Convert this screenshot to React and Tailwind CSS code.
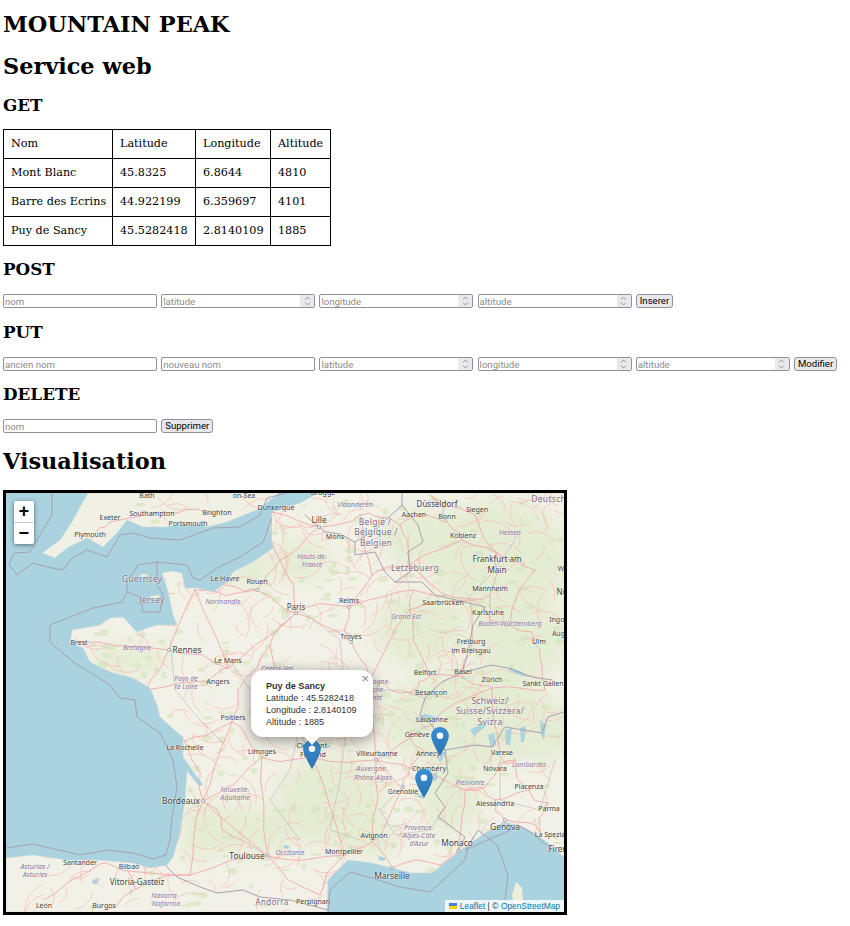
import React from "react";

const serif = "font-['DejaVu_Serif',serif]";

const rows = [
  ["Nom", "Latitude", "Longitude", "Altitude"],
  ["Mont Blanc", "45.8325", "6.8644", "4810"],
  ["Barre des Ecrins", "44.922199", "6.359697", "4101"],
  ["Puy de Sancy", "45.5282418", "2.8140109", "1885"],
];

// screen coordinates, the svg viewBox starts at the map's top left corner
const ukLand = "M88 493 80 507 72 522 60 540 42 553 55 558 67 548 87 538 103 547 117 533 127 520 143 527 167 527 187 523 207 527 227 522 257 510 277 495 278 493Z";
const mainLand =
  "M318 493 300 503 285 507 272 512 270 528 273 548 253 562 233 572 227 582 213 592 197 588 185 588 182 573 172 571 162 573 166 585 168 592 173 615 177 625 157 625 147 628 137 632 123 617 110 618 100 625 72 630 70 643 83 648 90 662 110 672 133 678 150 688 157 705 160 717 172 728 183 737 183 757 192 770 200 783 187 770 185 800 180 833 173 857 167 865 150 868 133 863 100 860 67 860 33 855 6 858 6 912 327 912 328 880 348 860 372 863 392 868 412 873 432 873 452 857 465 847 485 833 505 822 520 826 532 832 548 843 564 857 564 493Z";

const maritime = [
  "M52 493 52 515 40 535 30 552 14 553 9 564 17 575 33 563 47 567 63 570 72 558 87 550 107 557 120 535 133 533 150 538 180 540 213 528 240 527 260 515 267 498 287 493",
  "M157 562 138 565 127 582 127 592 142 598 142 612 160 612 163 595 157 585Z",
  "M157 562 187 565 193 578 200 580 217 568 240 557 263 542 272 518",
  "M127 592 122 602 93 608 50 625 50 642 73 662 110 685 120 698 135 700 137 717 160 733 173 760 177 787 172 817 170 840 165 857",
  "M6 848 33 844 80 855 107 850 133 853 153 859 165 855",
  "M328 912 330 890 350 872 372 878 400 887 430 892 452 872 465 860 468 846 478 830 497 845 508 875 505 900 510 912",
  "M465 850 520 826 535 835 552 850",
];
const landBorders = [
  "M165 857 165 865 177 877 200 887 217 893 243 890 260 897 290 900 313 906 328 910",
  "M305 515 325 532 340 534 355 542 355 555 375 552 385 572 395 582 422 582 435 595 465 602 485 607 473 625 468 652 462 673 442 682 425 698 420 715 432 725 445 750 448 773 435 793 445 807 438 817 465 837 458 852",
  "M402 493 402 505 418 525 423 542 408 552 410 572 395 582",
  "M355 542 375 530 402 505",
  "M462 673 491 665 508 668 532 677 552 680",
  "M445 750 475 745 492 747 505 727 542 733 548 717 564 712",
];
const regionBorders = [
  "M465 602 490 575 510 548 520 530",
  "M230 660 250 690 280 700 300 725 290 770 270 800 300 840",
  "M300 610 340 640 345 690 400 690 430 700",
  "M350 700 340 780 330 830 360 840",
  "M402 787 380 810 395 835 430 830 440 815",
  "M170 640 175 690 200 720 225 745",
  "M500 760 500 800 540 810 555 760",
];

const nodes = {
  paris: [296, 613], reims: [349, 607], rouen: [257, 590], havre: [225, 585], lille: [319, 527], dunk: [270, 512],
  amiens: [280, 560], rennes: [169, 650], brest: [72, 642], mans: [228, 668], angers: [208, 681], caen: [195, 590],
  nantes: [145, 690], poitiers: [232, 722], rochelle: [185, 741], limoges: [262, 757], bordeaux: [203, 801],
  toulouse: [268, 856], clermont: [312, 757], lyon: [376, 760], grenoble: [403, 787], marseille: [392, 868],
  montpellier: [345, 855], avignon: [372, 842], dijon: [370, 680], troyes: [351, 642], orleans: [270, 645],
  tours: [238, 690], nancy: [410, 610], metz: [412, 590], strasbourg: [470, 600], belfort: [430, 675],
  luxem: [410, 565], bruxelles: [360, 515], liege: [400, 525], aachen: [420, 515], koblenz: [462, 540],
  frankfurt: [497, 553], mannheim: [490, 595], karlsruhe: [490, 620], saarb: [445, 595], freiburg: [470, 655],
  basel: [463, 678], zurich: [492, 688], lausanne: [432, 725], geneve: [410, 738], chambery: [410, 768],
  annecy: [425, 752], milano: [515, 760], torino: [465, 790], genova: [505, 820], alessandria: [495, 800],
  piacenza: [529, 790], parma: [548, 803], spezia: [540, 832], monaco: [458, 851], nice: [440, 865],
  bilbao: [128, 871], santander: [100, 864], vitoria: [136, 889], burgos: [104, 910], leon: [44, 900],
  perpignan: [320, 895], pau: [190, 875], agen: [222, 830], brighton: [217, 515], south: [177, 513], exeter: [110, 522],
  plymouth: [90, 540], wurz: [535, 570], ulm: [540, 650], stuttgart: [510, 625], kempten: [545, 690], siegen: [475, 515],
  bonn: [447, 522], dus: [430, 495], sedan: [372, 575], besancon: [412, 692], varese: [500, 755], novara: [495, 775],
};
const edges = [
  ["paris", "reims"], ["paris", "rouen"], ["rouen", "havre"], ["paris", "amiens"], ["amiens", "lille"], ["lille", "dunk"], ["amiens", "rouen"], ["amiens", "dunk"],
  ["paris", "orleans"], ["paris", "mans"], ["mans", "rennes"], ["rennes", "brest"], ["mans", "angers"], ["angers", "nantes"], ["rennes", "nantes"], ["caen", "rouen"], ["caen", "rennes"], ["caen", "mans"],
  ["orleans", "tours"], ["tours", "poitiers"], ["poitiers", "bordeaux"], ["poitiers", "rochelle"], ["rochelle", "nantes"], ["rochelle", "bordeaux"], ["poitiers", "limoges"], ["limoges", "bordeaux"],
  ["orleans", "clermont"], ["limoges", "toulouse"], ["bordeaux", "toulouse"], ["bordeaux", "agen"], ["agen", "toulouse"], ["bordeaux", "pau"], ["pau", "toulouse"], ["pau", "bilbao"], ["toulouse", "montpellier"], ["toulouse", "perpignan"], ["montpellier", "perpignan"],
  ["clermont", "lyon"], ["clermont", "montpellier"], ["limoges", "clermont"], ["lyon", "grenoble"], ["lyon", "avignon"], ["avignon", "marseille"], ["avignon", "montpellier"], ["grenoble", "avignon"], ["marseille", "nice"], ["nice", "monaco"], ["monaco", "genova"], ["genova", "spezia"], ["genova", "alessandria"],
  ["lyon", "dijon"], ["dijon", "troyes"], ["troyes", "paris"], ["troyes", "reims"], ["reims", "sedan"], ["sedan", "luxem"], ["reims", "metz"], ["metz", "nancy"], ["nancy", "strasbourg"], ["metz", "saarb"], ["saarb", "mannheim"], ["strasbourg", "karlsruhe"], ["strasbourg", "freiburg"], ["freiburg", "basel"], ["basel", "zurich"], ["basel", "belfort"], ["belfort", "besancon"], ["besancon", "dijon"], ["nancy", "belfort"], ["dijon", "nancy"],
  ["lille", "bruxelles"], ["bruxelles", "liege"], ["liege", "aachen"], ["aachen", "bonn"], ["bonn", "koblenz"], ["koblenz", "frankfurt"], ["frankfurt", "mannheim"], ["mannheim", "karlsruhe"], ["karlsruhe", "stuttgart"], ["stuttgart", "ulm"], ["frankfurt", "wurz"], ["wurz", "stuttgart"], ["ulm", "kempten"], ["zurich", "kempten"], ["zurich", "lausanne"], ["lausanne", "geneve"], ["geneve", "lyon"], ["geneve", "annecy"], ["annecy", "chambery"], ["chambery", "lyon"], ["chambery", "grenoble"], ["chambery", "torino"], ["torino", "novara"], ["novara", "milano"], ["milano", "varese"], ["varese", "zurich"], ["milano", "piacenza"], ["piacenza", "parma"], ["torino", "alessandria"], ["alessandria", "piacenza"], ["parma", "spezia"], ["torino", "monaco"], ["luxem", "koblenz"], ["luxem", "liege"], ["sedan", "bruxelles"], ["siegen", "frankfurt"], ["dus", "bonn"], ["dus", "siegen"], ["bilbao", "santander"], ["bilbao", "vitoria"], ["vitoria", "burgos"], ["santander", "leon"], ["pau", "vitoria"], ["south", "brighton"], ["exeter", "plymouth"], ["exeter", "south"], ["saarb", "luxem"],
];

function rnd(seed) {
  const v = Math.sin(seed * 127.1) * 43758.5453;
  return v - Math.floor(v);
}

function roadPath([a, b], i) {
  const p = nodes[a];
  const q = nodes[b];
  const mx = (p[0] + q[0]) / 2 + (rnd(i + 1) - 0.5) * 14;
  const my = (p[1] + q[1]) / 2 + (rnd(i + 40) - 0.5) * 14;
  return `M${p[0]} ${p[1]} L${(p[0] + mx) / 2 + (rnd(i + 9) - 0.5) * 5} ${(p[1] + my) / 2 + (rnd(i + 70) - 0.5) * 5} L${mx} ${my} L${(q[0] + mx) / 2 + (rnd(i + 13) - 0.5) * 5} ${(q[1] + my) / 2 + (rnd(i + 90) - 0.5) * 5} L${q[0]} ${q[1]}`;
}

function onLand(x, y) {
  if (x < 170 && y < 850 && y > 690) return false;
  if (x < 130 && y < 632) return false;
  if (x > 330 && y > 880) return false;
  return !(y < 570 && x < 265 && y > 528);
}

const sideRoads = [];
for (let i = 0; i < 560; i++) {
  const x = 40 + rnd(i + 200) * 525;
  const y = 496 + rnd(i + 500) * 414;
  const a = rnd(i + 800) * 6.28;
  const l = 12 + rnd(i + 900) * 24;
  if (onLand(x, y) && onLand(x + Math.cos(a) * l, y + Math.sin(a) * l)) {
    sideRoads.push(`M${x} ${y} Q${x + Math.cos(a + 0.6) * l * 0.6} ${y + Math.sin(a + 0.6) * l * 0.6} ${x + Math.cos(a) * l} ${y + Math.sin(a) * l}`);
  }
}

// green blotches of the tile
const blotches = [
  [470, 720, 90, 50], [500, 560, 70, 60], [430, 540, 50, 30], [330, 800, 55, 45], [250, 830, 50, 24], [200, 830, 22, 30],
  [420, 630, 45, 35], [450, 800, 30, 35], [520, 640, 50, 40], [540, 730, 40, 30], [300, 700, 40, 25], [250, 570, 20, 18],
  [370, 840, 30, 16], [130, 660, 40, 14], [300, 560, 30, 20],
];
const specks = [];
for (let i = 0; i < 420; i++) {
  const x = 60 + rnd(i + 1200) * 505;
  const y = 496 + rnd(i + 1500) * 414;
  if (onLand(x, y)) specks.push([x, y, 1.5 + rnd(i + 1700) * 4, 1 + rnd(i + 1900) * 2.5]);
}

const cities = [
  ["Bath", 147, 495, 7], ["on-Sea", 244, 495, 7], ["Brugge", 323, 492, 7], ["Exeter", 110, 517, 7], ["Southampton", 152, 513, 7], ["Brighton", 217, 512, 7],
  ["Portsmouth", 188, 523, 7], ["Dunkerque", 276, 507, 7], ["Plymouth", 90, 534, 7], ["Le Havre", 225, 578, 7], ["Rouen", 257, 581, 7], ["Brest", 79, 642, 7],
  ["Rennes", 187, 650, 8.4], ["Le Mans", 228, 660, 7], ["Angers", 218, 681, 7], ["Düsseldorf", 437, 504, 8], ["Siegen", 477, 509, 7], ["Lille", 319, 520, 8],
  ["Aachen", 414, 514, 7], ["Bonn", 447, 516, 7], ["Mons", 335, 536, 7], ["Koblenz", 463, 535, 7], ["Frankfurt am", 497, 559, 8], ["Main", 497, 570, 8],
  ["Würzburg", 574, 568, 7], ["Mannheim", 490, 588, 7], ["Nürnberg", 575, 592, 8], ["Reims", 349, 600, 7], ["Saarbrücken", 443, 602, 7], ["Paris", 296, 607, 8],
  ["Karlsruhe", 488, 612, 7], ["Ingolstadt", 566, 619, 7], ["Augsburg", 568, 633, 7], ["Troyes", 351, 636, 7], ["Ulm", 539, 642, 7.2], ["Freiburg", 471, 642, 7.2],
  ["im Breisgau", 471, 650, 7], ["Belfort", 425, 672, 7], ["Basel", 463, 671, 7], ["Zürich", 492, 679, 7], ["Sankt Gallen", 543, 683, 7], ["Besançon", 431, 692, 7],
  ["Lausanne", 432, 719, 7], ["Genève", 417, 734, 7], ["Annecy", 428, 753, 7], ["Varese", 502, 752, 7], ["Clermont-", 313, 745, 7], ["Ferrand", 313, 754, 7],
  ["Villeurbanne", 377, 753, 7], ["Chambéry", 429, 768, 7], ["Novara", 495, 768, 7], ["Grenoble", 403, 791, 7], ["Piacenza", 529, 786, 7], ["Alessandria", 495, 803, 7],
  ["Parma", 549, 808, 7], ["Genova", 505, 827, 8.4], ["La Spezia", 550, 834, 7], ["Avignon", 374, 835, 7], ["Monaco", 457, 843, 8.4], ["Firenze", 562, 849, 8],
  ["Montpellier", 344, 851, 7], ["Marseille", 392, 876, 8.4], ["Perpignan", 313, 901, 7], ["Poitiers", 233, 717, 7], ["La Rochelle", 185, 747, 7], ["Limoges", 262, 751, 7],
  ["Bordeaux", 181, 801, 8.4], ["Toulouse", 247, 856, 8.4], ["Santander", 80, 862, 7], ["Bilbao", 129, 866, 7], ["Vitoria-Gasteiz", 137, 882, 8], ["León", 44, 905, 7], ["Burgos", 104, 905, 7],
];
const countries = [
  ["Guernsey", 142, 579, 8.5], ["Jersey", 152, 600, 8.5], ["België /", 375, 522, 8.5], ["Belgique /", 376, 532, 8.5], ["Belgien", 376, 543, 8.5], ["Letzebuerg", 415, 568, 8.5],
  ["Deutschland", 558, 499, 8.5], ["Schweiz/", 490, 701, 8.5], ["Suisse/Svizzera/", 490, 711, 8.5], ["Svizra", 490, 722, 8.5], ["Andorra", 272, 902, 8],
];
const regions = [
  ["Normandie", 223, 601], ["Bretagne", 137, 647], ["Centre-Val", 277, 668], ["Pays de", 186, 678], ["la Loire", 186, 686], ["Vlaanderen", 355, 504], ["Hessen", 510, 532],
  ["Hauts-de-", 312, 556], ["France", 312, 564], ["Grand Est", 406, 616], ["Baden-Württemberg", 510, 623], ["Bourgogne-", 372, 681], ["Franche-", 372, 689], ["Comté", 372, 697],
  ["Lombardia", 529, 764], ["Auvergne-", 372, 768], ["Rhône-Alpes", 373, 777], ["Piemonte", 470, 782], ["Provence-", 419, 827], ["Alpes-Côte", 419, 835], ["d'Azur", 419, 843],
  ["Occitanie", 290, 852], ["Nouvelle-", 235, 789], ["Aquitaine", 235, 797], ["Asturias /", 35, 866], ["Asturies", 35, 874], ["Navarra", 164, 895], ["Nafarroa", 166, 903],
];
const dots = ["paris", "rouen", "lille", "reims", "troyes", "lyon", "grenoble", "marseille", "toulouse", "rennes", "bordeaux", "genova", "monaco"];

function MapLabel({ text, x, y, size, className }) {
  return (
    <span
      className={`absolute -translate-x-1/2 -translate-y-1/2 whitespace-nowrap leading-none font-['Noto_Sans',sans-serif] [text-shadow:0_0_1.5px_#fff,0_0_1.5px_#fff] ${className}`}
      style={{ left: x - 6, top: y - 493, fontSize: size }}
    >
      {text}
    </span>
  );
}

function Marker({ x, y }) {
  return (
    <svg className="absolute" style={{ left: x - 6, top: y - 493 }} width="18" height="29" viewBox="0 0 25 41">
      <defs>
        <linearGradient id="pin" x1="0" y1="0" x2="0" y2="1">
          <stop offset="0" stopColor="#3a8fd2" />
          <stop offset="1" stopColor="#2a73b2" />
        </linearGradient>
      </defs>
      <path d="M12.5 0C5.6 0 0 5.6 0 12.5 0 21 12.5 41 12.5 41S25 21 25 12.5C25 5.6 19.4 0 12.5 0z" fill="url(#pin)" />
      <circle cx="12.5" cy="12.5" r="4.6" fill="#fff" />
    </svg>
  );
}

function Field({ placeholder, number }) {
  return (
    <div className="relative w-[154px] h-[14px] shrink-0">
      <input
        type="text"
        placeholder={placeholder}
        className="block w-full h-full border border-[#8f8f9d] rounded-[2px] bg-white px-[1px] text-[9.6px] leading-[12px] font-['Roboto',sans-serif] placeholder:text-[#8b8b8b] outline-none"
      />
      {number && (
        <span className="absolute right-[1px] top-[1px] bottom-[1px] w-[14px] bg-[#e9e9ed] flex items-center justify-center">
          <svg width="7" height="10" viewBox="0 0 7 10" fill="none" stroke="#8a8a8a" strokeWidth="0.9">
            <path d="M1 3.5 3.5 1 6 3.5" />
            <path d="M1 6.5 3.5 9 6 6.5" />
          </svg>
        </span>
      )}
    </div>
  );
}

function Submit({ children }) {
  return (
    <button className="h-[14px] px-[3px] border border-[#8f8f9d] rounded-[3px] bg-[#e9e9ed] text-[9.6px] leading-[12px] text-black font-['Roboto',sans-serif]">
      {children}
    </button>
  );
}

export default function App() {
  return (
    <div className={`${serif} bg-white text-black h-[926px] overflow-hidden pl-[3px]`}>
      <h1 className="pt-[11px] text-[22.4px] leading-[27px] font-bold">MOUNTAIN PEAK</h1>
      <h2 className="mt-[15px] text-[22.4px] leading-[27px] font-bold">Service web</h2>
      <h3 className="mt-[15px] text-[16.8px] leading-[21px] font-bold">GET</h3>

      <table className="mt-[13px] w-[328px] table-fixed border-collapse border border-black text-[11.2px]">
        <colgroup>
          <col className="w-[109px]" />
          <col className="w-[83px]" />
          <col className="w-[75px]" />
          <col className="w-[60px]" />
        </colgroup>
        <tbody>
          {rows.map((row) => (
            <tr key={row[0]} className="h-[29px]">
              {row.map((cell) => (
                <td key={cell} className="border border-black px-[7px] pt-[1px] pb-0 whitespace-nowrap">
                  {cell}
                </td>
              ))}
            </tr>
          ))}
        </tbody>
      </table>

      <h3 className="mt-[13px] text-[16.8px] leading-[21px] font-bold">POST</h3>
      <div className="mt-[14px] flex gap-[4.2px]">
        <Field placeholder="nom" />
        <Field placeholder="latitude" number />
        <Field placeholder="longitude" number />
        <Field placeholder="altitude" number />
        <Submit>Inserer</Submit>
      </div>

      <h3 className="mt-[14px] text-[16.8px] leading-[21px] font-bold">PUT</h3>
      <div className="mt-[14px] flex gap-[4.2px]">
        <Field placeholder="ancien nom" />
        <Field placeholder="nouveau nom" />
        <Field placeholder="latitude" number />
        <Field placeholder="longitude" number />
        <Field placeholder="altitude" number />
        <Submit>Modifier</Submit>
      </div>

      <h3 className="mt-[13px] text-[16.8px] leading-[21px] font-bold">DELETE</h3>
      <div className="mt-[14px] flex gap-[4.2px]">
        <Field placeholder="nom" />
        <Submit>Supprimer</Submit>
      </div>

      <h2 className="mt-[15px] text-[22.4px] leading-[27px] font-bold">Visualisation</h2>

      <div className="relative mt-[15px] w-[564px] h-[425px] border-[3px] border-black overflow-hidden bg-[#aad3df]">
        <svg className="absolute inset-0 blur-[0.3px]" width="558" height="419" viewBox="6 493 558 419">
          <defs>
            <filter id="soft"><feGaussianBlur stdDeviation="9" /></filter>
            <clipPath id="land"><path d={`${mainLand} ${ukLand}`} /></clipPath>
          </defs>
          <rect x="6" y="493" width="558" height="419" fill="#aad3df" />
          <path d={ukLand} fill="#f1f0e5" stroke="#c7d6d6" strokeWidth="0.5" />
          <path d={mainLand} fill="#f2f1e7" stroke="#c7d6d6" strokeWidth="0.5" />
          <path d="M515 912 512 895 516 882 522 888 524 912Z" fill="#eeedd9" />
          <path d="M141 574 148 574 146 577 140 577ZM150 596 160 595 158 599 151 599Z" fill="#eeedd9" />
          <g clipPath="url(#land)">
            <g filter="url(#soft)" fill="#dfeaca" opacity="0.7">
              {blotches.map(([x, y, rx, ry]) => (
                <ellipse key={`${x}-${y}`} cx={x} cy={y} rx={rx} ry={ry} />
              ))}
            </g>
            <g fill="#cfe3b4" opacity="0.55">
              {specks.map(([x, y, rx, ry]) => (
                <ellipse key={`${x}-${y}`} cx={x} cy={y} rx={rx} ry={ry} />
              ))}
            </g>
          </g>
          <g fill="#aad3df">
            <path d="M415 719 424 714 438 717 432 721 420 722Z" />
            <path d="M508 667 520 671 530 677 522 676 510 671Z" />
            <path d="M438 760 442 752 446 752 441 762ZM432 778 436 770 438 778 434 782ZM418 794 424 796 424 799 418 797Z" />
            <path d="M488 735 494 733 496 745 491 748ZM505 730 512 728 510 745 506 745ZM520 728 526 726 524 742 521 742ZM540 720 546 725 544 740 541 735ZM470 730 484 722 486 726 474 736Z" />
            <path d="M284 845 290 846 288 849 284 848ZM92 880 100 878 97 884 93 884ZM378 856 386 858 384 861 379 860Z" />
            <path d="M183 757 186 765 196 775 203 785 199 786 190 775 184 766Z" />
          </g>
          <g fill="none" strokeLinecap="round" strokeLinejoin="round" clipPath="url(#land)">
            <g stroke="#f6bdb9" strokeWidth="0.7">
              {sideRoads.map((d) => (
                <path key={d} d={d} />
              ))}
            </g>
            <g stroke="#f3a9ac" strokeWidth="0.9">
              {edges.map((edge, i) => (
                <path key={edge.join("-")} d={roadPath(edge, i)} />
              ))}
            </g>
            <g stroke="#bdb6c0" strokeWidth="0.6">
              {regionBorders.map((d) => (
                <path key={d} d={d} />
              ))}
            </g>
            <g stroke="#a89fb0" strokeWidth="1">
              {landBorders.map((d) => (
                <path key={d} d={d} />
              ))}
            </g>
          </g>
          <g fill="none" stroke="#a79fb8" strokeWidth="1" strokeLinejoin="round">
            {maritime.map((d) => (
              <path key={d} d={d} />
            ))}
          </g>
          <g fill="#fff" stroke="#777" strokeWidth="0.6">
            {dots.map((name) => (
              <circle key={name} cx={nodes[name][0]} cy={nodes[name][1]} r="1.5" />
            ))}
          </g>
        </svg>

        {cities.map(([text, x, y, size]) => (
          <MapLabel key={text} text={text} x={x} y={y} size={size} className="text-[#3c3c3c]" />
        ))}
        {countries.map(([text, x, y, size]) => (
          <MapLabel key={text} text={text} x={x} y={y} size={size} className="text-[#7a6782] tracking-[0.3px]" />
        ))}
        {regions.map(([text, x, y]) => (
          <MapLabel key={text} text={text} x={x} y={y} size={7} className="italic text-[#8a6f94]" />
        ))}

        <Marker x={303} y={740} />
        <Marker x={431} y={727} />
        <Marker x={415} y={769} />

        <div className="absolute left-[8px] top-[8px] w-[20px] rounded-[2px] bg-white shadow-[0_1px_4px_rgba(0,0,0,0.5)] font-['Liberation_Mono',monospace] font-bold text-black">
          <div className="h-[22px] flex items-center justify-center text-[18px] leading-none border-b border-[#cccccc]">+</div>
          <div className="h-[21px] flex items-center justify-center text-[18px] leading-none">−</div>
        </div>

        <div className="absolute left-[245px] top-[177px] w-[122px] h-[67px] rounded-[12px] bg-white shadow-[0_3px_14px_rgba(0,0,0,0.4)] pl-[15px] pt-[10px] font-['Liberation_Sans',sans-serif] text-[9.1px] leading-[12px] text-[#333333]">
          <b className="block">Puy de Sancy</b>
          <div>Latitude : 45.5282418</div>
          <div>Longitude : 2.8140109</div>
          <div>Altitude : 1885</div>
          <span className="absolute right-[4px] top-[2px] text-[13px] leading-[13px] text-[#8a8a8a]">×</span>
          <span className="absolute left-[53px] top-[66px] w-0 h-0 border-l-[8px] border-r-[8px] border-t-[9px] border-l-transparent border-r-transparent border-t-white" />
        </div>

        <div className="absolute right-0 bottom-0 h-[12px] pl-[4px] pr-[4px] flex items-center gap-[2.5px] bg-white/80 font-['Liberation_Sans',sans-serif] text-[8.4px] leading-[12px] text-[#333333]">
          <svg width="8" height="6" viewBox="0 0 8 6">
            <rect width="8" height="3" fill="#4C7BE1" />
            <rect y="3" width="8" height="3" fill="#FFD500" />
          </svg>
          <span className="text-[#0078a8]">Leaflet</span>
          <span>|</span>
          <span>©</span>
          <span className="text-[#0078a8]">OpenStreetMap</span>
        </div>
      </div>
    </div>
  );
}
